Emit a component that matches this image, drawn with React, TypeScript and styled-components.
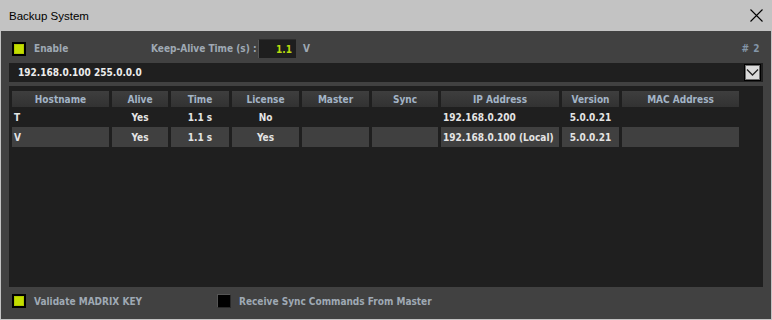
import React from "react";
import styled, { createGlobalStyle } from "styled-components";

const Global = createGlobalStyle`
  html, body { margin: 0; padding: 0; background: #c3c3c3; }
  * { box-sizing: border-box; }
`;

const Window = styled.div`
  width: 772px;
  height: 320px;
  background: #c3c3c3;
  display: flex;
  flex-direction: column;
  padding: 0 1px 1px 1px;
  font-family: "DejaVu Sans Condensed", "DejaVu Sans", Verdana, sans-serif;
`;

const TitleBar = styled.div`
  height: 31px;
  display: flex;
  align-items: center;
  justify-content: space-between;
  padding: 0 8px 0 8px;
`;

const Title = styled.span`
  font-family: "Liberation Sans", Arial, sans-serif;
  font-size: 11.5px;
  color: #000;
  padding-top: 1px;
`;

const CloseBtn = styled.div`
  width: 14px;
  height: 14px;
  display: flex;
  align-items: center;
  justify-content: center;
`;

const Body = styled.div`
  flex: 1;
  background: #414141;
  display: flex;
  flex-direction: column;
  padding: 8px 8px 0 8px;
`;

const TopRow = styled.div`
  height: 19px;
  display: flex;
  align-items: center;
`;

const Group = styled.div<{ $w?: number }>`
  display: flex;
  align-items: center;
  width: ${(p) => (p.$w ? `${p.$w}px` : "auto")};
  flex: none;
  overflow: visible;
`;

const Check = styled.div<{ $on?: boolean; $ml?: number }>`
  width: 14px;
  height: 14px;
  flex: none;
  margin-left: ${(p) => p.$ml ?? 0}px;
  background: ${(p) => (p.$on ? "#c3dd00" : "#000")};
  border: ${(p) => (p.$on ? "2px solid #000" : "1px solid #555")};
  border-right-color: ${(p) => (p.$on ? "#000" : "#2a2a2a")};
  border-bottom-color: ${(p) => (p.$on ? "#000" : "#2a2a2a")};
  box-shadow: ${(p) => (p.$on ? "inset 0 0 0 1px #b0c800" : "none")};
`;

const Label = styled.span<{ $ml?: number }>`
  font-size: 10px;
  font-weight: bold;
  color: #9fa9b4;
  margin-left: ${(p) => p.$ml ?? 0}px;
  white-space: nowrap;
`;

const NumInput = styled.div`
  width: 38px;
  height: 19px;
  background: #1e1e1e;
  border-top: 1px solid #2c2c2c;
  border-left: 1px solid #555;
  display: flex;
  align-items: center;
  justify-content: flex-end;
  padding-right: 4px;
  font-size: 10px;
  font-weight: bold;
  color: #b7dc0e;
`;

const Counter = styled.span`
  margin-left: auto;
  margin-right: 3px;
  font-size: 10px;
  font-weight: bold;
  color: #8496a8;
  letter-spacing: 0.5px;
`;

const Dropdown = styled.div`
  margin-top: 5px;
  height: 19px;
  background: #1f1f1f;
  display: flex;
  align-items: center;
  padding: 0 2px 0 9px;
  font-size: 10px;
  font-weight: bold;
  color: #ececec;
`;

const DropValue = styled.span`
  flex: 1;
`;

const DropButton = styled.div`
  width: 17px;
  height: 17px;
  background: #dadada;
  border: 1px solid #000;
  box-shadow: inset 0 0 0 1px #6e6e6e;
  display: flex;
  align-items: center;
  justify-content: center;
`;

const TablePanel = styled.div`
  margin-top: 4px;
  height: 201px;
  background: #1f1f1f;
  padding: 5px 0 0 3px;
`;

const Grid = styled.div`
  display: grid;
  grid-template-columns: 97px 56px 58px 67px 67px 66px 118px 57px 117px;
  grid-template-rows: 16px 20px 20px;
  column-gap: 3px;
`;

const HeadCell = styled.div`
  background: linear-gradient(#3e3e3e, #323232);
  display: flex;
  align-items: center;
  justify-content: center;
  font-size: 10px;
  font-weight: bold;
  color: #a3b4c6;
  white-space: nowrap;
`;

const Cell = styled.div<{ $filled?: boolean; $align?: "left" | "center" }>`
  background: ${(p) => (p.$filled ? "#404040" : "transparent")};
  display: flex;
  align-items: center;
  justify-content: ${(p) => (p.$align === "left" ? "flex-start" : "center")};
  padding-left: ${(p) => (p.$align === "left" ? "2px" : "0")};
  font-size: 10px;
  font-weight: bold;
  color: #e4e4e4;
  white-space: nowrap;
`;

const BottomRow = styled.div`
  margin-top: 7px;
  height: 14px;
  display: flex;
  align-items: center;
`;

const columns = [
  "Hostname",
  "Alive",
  "Time",
  "License",
  "Master",
  "Sync",
  "IP Address",
  "Version",
  "MAC Address",
];

const leftCols = new Set([0, 6]);

const rows = [
  { filled: false, values: ["T", "Yes", "1.1 s", "No", "", "", "192.168.0.200", "5.0.0.21", ""] },
  { filled: true, values: ["V", "Yes", "1.1 s", "Yes", "", "", "192.168.0.100 (Local)", "5.0.0.21", ""] },
];

export default function App() {
  return (
    <>
      <Global />
      <Window>
        <TitleBar>
          <Title>Backup System</Title>
          <CloseBtn>
            <svg width="13" height="13" viewBox="0 0 13 13">
              <path d="M0.5 0.5 L12.5 12.5 M12.5 0.5 L0.5 12.5" stroke="#000" strokeWidth="1.1" />
            </svg>
          </CloseBtn>
        </TitleBar>
        <Body>
          <TopRow>
            <Group $w={142}>
              <Check $on $ml={3} />
              <Label $ml={8}>Enable</Label>
            </Group>
            <Group $w={107}>
              <Label>Keep-Alive Time (s) :</Label>
            </Group>
            <NumInput>1.1</NumInput>
            <Label $ml={7}>V</Label>
            <Counter># 2</Counter>
          </TopRow>
          <Dropdown>
            <DropValue>192.168.0.100 255.0.0.0</DropValue>
            <DropButton>
              <svg width="13" height="9" viewBox="0 0 13 9">
                <path d="M1 1.5 L6.5 7 L12 1.5" stroke="#222" strokeWidth="1.3" fill="none" />
              </svg>
            </DropButton>
          </Dropdown>
          <TablePanel>
            <Grid>
              {columns.map((c) => (
                <HeadCell key={c}>{c}</HeadCell>
              ))}
              {rows.map((r, ri) =>
                r.values.map((v, ci) => (
                  <Cell key={`${ri}-${ci}`} $filled={r.filled} $align={leftCols.has(ci) ? "left" : "center"}>
                    {v}
                  </Cell>
                ))
              )}
            </Grid>
          </TablePanel>
          <BottomRow>
            <Group $w={208}>
              <Check $on $ml={3} />
              <Label $ml={8}>Validate MADRIX KEY</Label>
            </Group>
            <Check />
            <Label $ml={8}>Receive Sync Commands From Master</Label>
          </BottomRow>
        </Body>
      </Window>
    </>
  );
}
